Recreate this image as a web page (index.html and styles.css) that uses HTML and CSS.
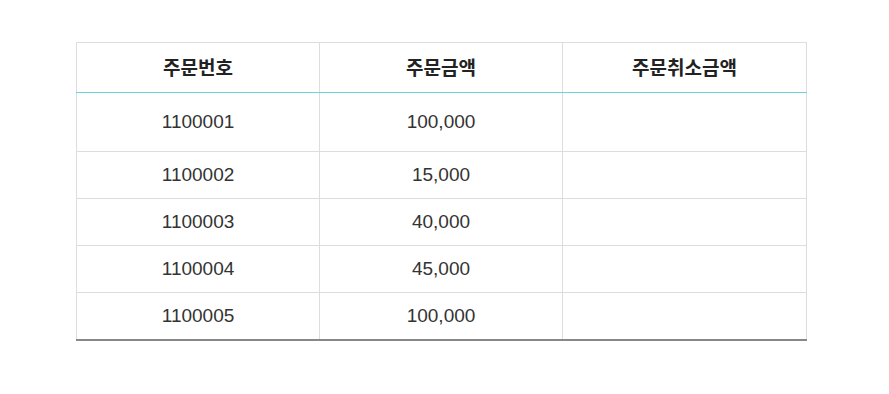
FILE: index.html
```html
<!DOCTYPE html>
<html lang="ko">
<head>
<meta charset="utf-8">
<link rel="stylesheet" href="styles.css">
</head>
<body>
<div class="wrap">
<table class="orders">
<colgroup><col class="c1"><col class="c2"><col class="c3"></colgroup>
<thead>
<tr><th>주문번호</th><th>주문금액</th><th>주문취소금액</th></tr>
</thead>
<tbody>
<tr class="first"><td>1100001</td><td>100,000</td><td></td></tr>
<tr><td>1100002</td><td>15,000</td><td></td></tr>
<tr><td>1100003</td><td>40,000</td><td></td></tr>
<tr><td>1100004</td><td>45,000</td><td></td></tr>
<tr class="last"><td>1100005</td><td>100,000</td><td></td></tr>
</tbody>
</table>
</div>
</body>
</html>
```
FILE: styles.css
```css
html, body { margin: 0; padding: 0; background: #fff; }
.wrap { padding: 42px 0 0 76px; }
.orders {
  border-collapse: collapse;
  width: 731px;
  table-layout: fixed;
  color: #333;
}
.orders .c1 { width: 243px; }
.orders .c2 { width: 243px; }
.orders th, .orders td {
  border: 1px solid #dddddd;
  text-align: center;
  padding: 0;
}
.orders th {
  height: 47px;
  padding-bottom: 2px;
  font-family: "Noto Sans CJK KR", sans-serif;
  font-weight: 700;
  font-size: 19px;
  line-height: 24px;
  color: #222;
  border-bottom: 1px solid #6dd3dc;
}
.orders tr.first td {
  height: 58px;
  border-top: 1px solid #6dd3dc;
}
.orders td {
  height: 46px;
  font-family: "Liberation Sans", Arial, sans-serif;
  font-size: 19px;
}
.orders tr.last td { border-bottom: 2px solid #888; }
```
